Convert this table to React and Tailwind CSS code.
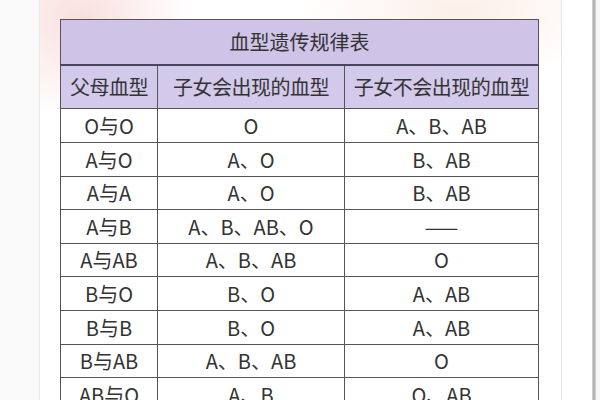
import React from "react";

const rows = [
  ["O与O", "O", "A、B、AB", 34],
  ["A与O", "A、O", "B、AB", 34],
  ["A与A", "A、O", "B、AB", 33],
  ["A与B", "A、B、AB、O", "——", 34],
  ["A与AB", "A、B、AB", "O", 33],
  ["B与O", "B、O", "A、AB", 34],
  ["B与B", "B、O", "A、AB", 34],
  ["B与AB", "A、B、AB", "O", 33],
  ["AB与O", "A、B", "O、AB", 34],
];

export default function App() {
  const font = { fontFamily: '"Noto Sans CJK SC", "Noto Sans", sans-serif' };
  return (
    <div className="w-[600px] h-[400px] overflow-hidden flex bg-white" style={font}>
      <div className="w-[40px] h-full bg-[#f9f9f9] border-r border-[#e8e8e8]" />
      <div className="w-[521px] h-full pl-[20px] pt-[19px] bg-[radial-gradient(ellipse_110px_100px_at_40px_20px,#f9dede,transparent),radial-gradient(ellipse_160px_70px_at_420px_10px,#fcefe8,transparent)]">
        <table className="border-collapse table-fixed w-[478px] text-[#333] text-[20px] leading-none">
          <colgroup>
            <col className="w-[97px]" />
            <col className="w-[187px]" />
            <col className="w-[194px]" />
          </colgroup>
          <tbody>
            <tr className="h-[45px] bg-[#cfc4e8]">
              <td colSpan={3} className="border-[1.5px] border-[#555] border-b-2 border-b-[#4a4560] text-center">血型遗传规律表</td>
            </tr>
            <tr className="h-[44px] bg-[#d3c9eb]">
              <td className="border-[1.5px] border-[#555] text-center tracking-[-0.5px]">父母血型</td>
              <td className="border-[1.5px] border-[#555] text-center tracking-[-0.5px]">子女会出现的血型</td>
              <td className="border-[1.5px] border-[#555] text-center tracking-[-0.5px]">子女不会出现的血型</td>
            </tr>
            {rows.map(([a, b, c, h], i) => (
              <tr key={i} className="bg-white" style={{ height: h }}>
                <td className="border-[1.5px] border-[#555] text-center">{a}</td>
                <td className="border-[1.5px] border-[#555] text-center">{b}</td>
                <td className="border-[1.5px] border-[#555] text-center">{c}</td>
              </tr>
            ))}
          </tbody>
        </table>
      </div>
      <div className="w-[31px] h-full bg-white border-l border-[#e4e4e4]" />
      <div className="w-[4px] h-full bg-[#b3b3b3] border-x border-[#cfcfcf]" />
      <div className="w-[4px] h-full bg-[#f7f7f7]" />
    </div>
  );
}
